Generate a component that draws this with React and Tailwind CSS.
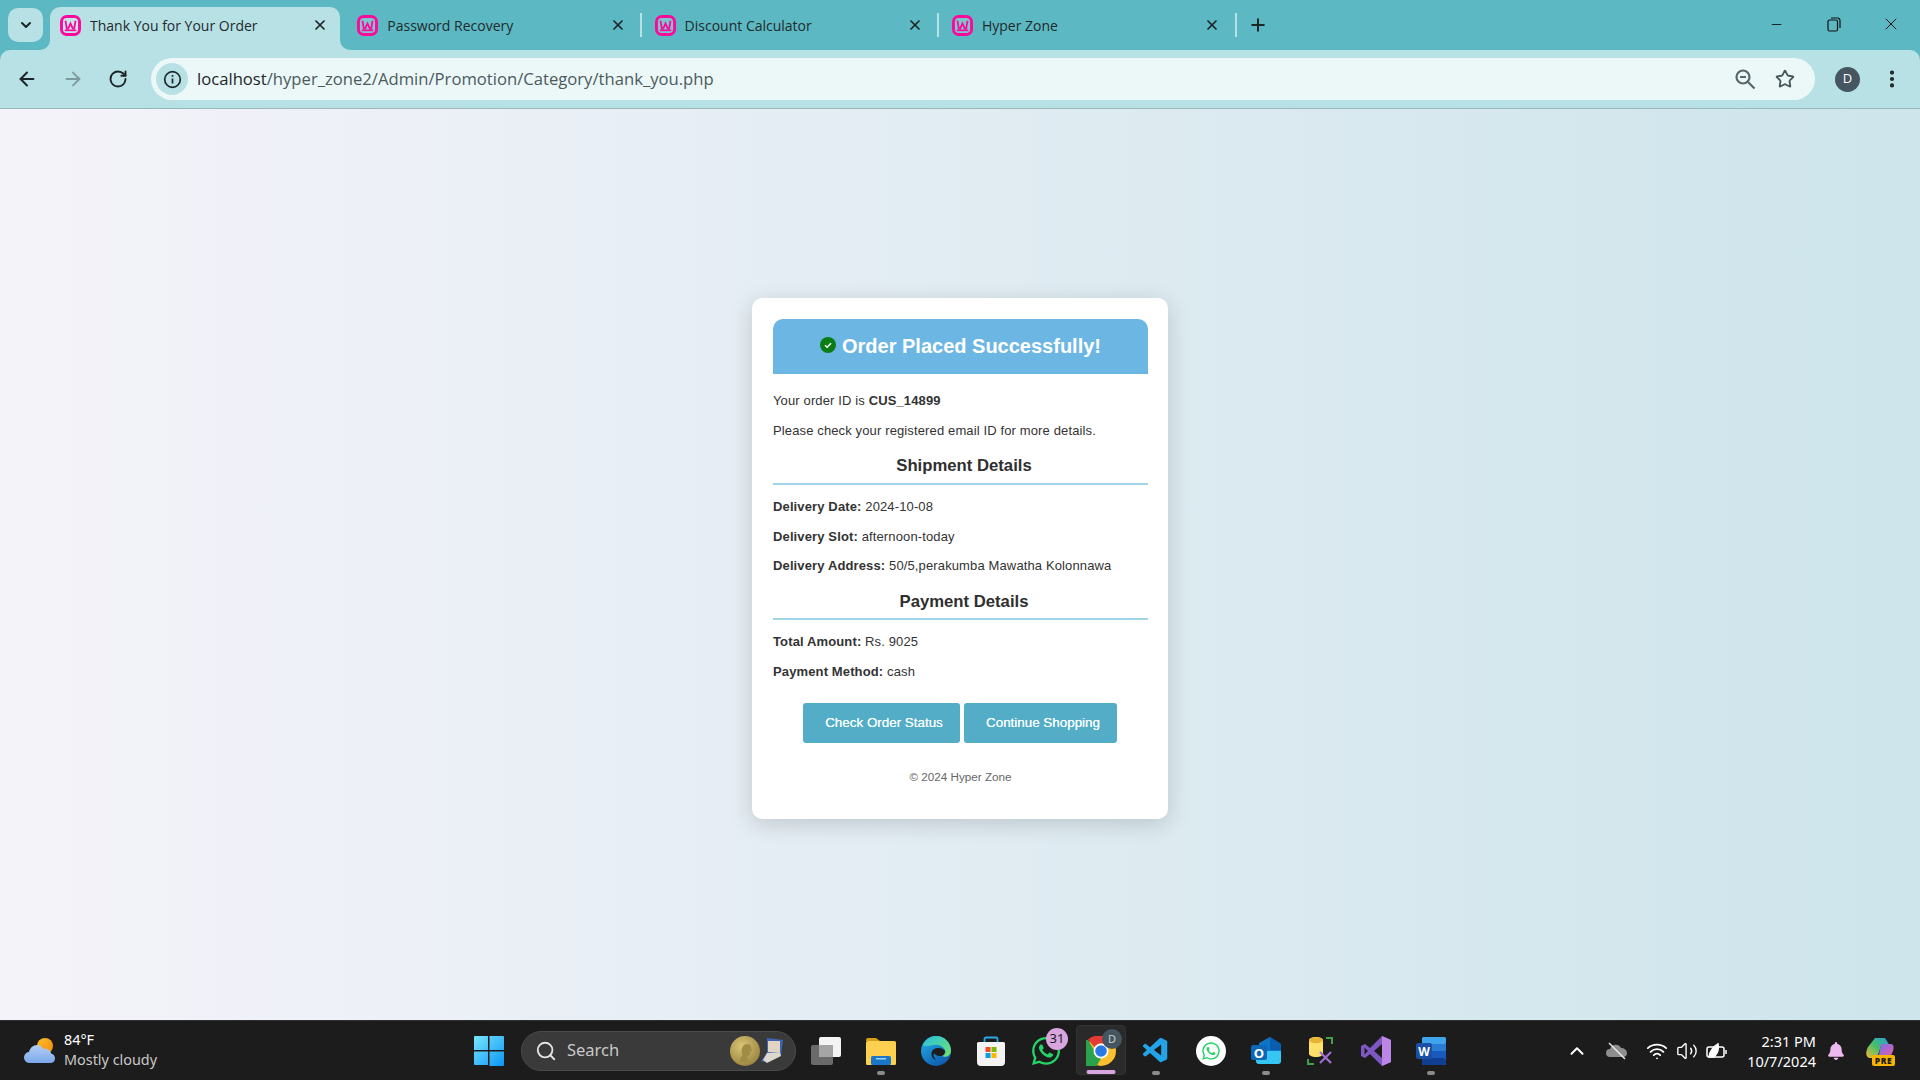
import React from "react";
import { ArrowLeft, ArrowRight, RotateCw, X, Plus, ChevronDown, ChevronUp, Search, Star, EllipsisVertical, Minus, Wifi, Volume2 } from "lucide-react";
import { FaWhatsapp, FaBell } from "react-icons/fa";
import { VscVscode } from "react-icons/vsc";

const Favicon = () => (
  <svg width="21" height="21" viewBox="0 0 20 20" className="shrink-0">
    <rect x="1.4" y="1.4" width="17.2" height="17.2" rx="5" fill="#fff" fillOpacity="0.2" stroke="#fb0a9c" strokeWidth="2.8" />
    <path d="M5.200 5.500l1.300 7.500h1.300l2.200-5 2.200 5h1.300l1.300-7.500" fill="none" stroke="#fb0a9c" strokeWidth="1.700" />
    <rect x="4.500" y="13.800" width="11" height="1.600" fill="#fb0a9c" />
  </svg>
);

const Tab = ({ title, active, sep }) => (
  <div className="relative flex h-[43px] w-[297.3px] shrink-0 items-center pb-[7px] pl-[10px] pr-[2.5px]">
    {active && (
      <>
        <div className="absolute left-0 top-0 h-full w-[290px] rounded-t-[10px] bg-[#b7e1e5]" />
        <div className="absolute bottom-0 left-[-10px] h-[10px] w-[10px] bg-[#b7e1e5]">
          <div className="h-full w-full rounded-br-[10px] bg-[#5cb8c2]" />
        </div>
        <div className="absolute bottom-0 left-[290px] h-[10px] w-[10px] bg-[#b7e1e5]">
          <div className="h-full w-full rounded-bl-[10px] bg-[#5cb8c2]" />
        </div>
      </>
    )}
    <div className="relative flex h-full flex-1 items-center">
      <Favicon />
      <span className="ml-[9px] flex-1 truncate font-['Open_Sans',sans-serif] text-[14px] text-[#1f2a2c]">{title}</span>
      <X size={16} strokeWidth={2.6} className="mr-[14.5px] text-[#1f2628]" />
      <div className={`h-[24px] w-[2px] ${sep ? "bg-[#b7e1e5]" : "bg-transparent"}`} />
    </div>
  </div>
);

const TopBar = () => (
  <div className="shrink-0">
    <div className="relative flex h-[50px] items-end bg-[#5cb8c2] pl-[8px]">
      <div className="mb-[8px] mr-[7px] flex h-[34px] w-[35px] items-center justify-center rounded-[10px] bg-[#b7e1e5]">
        <ChevronDown size={16} strokeWidth={3} className="text-[#1f2628]" />
      </div>
      <Tab title="Thank You for Your Order" active />
      <Tab title="Password Recovery" sep />
      <Tab title="Discount Calculator" sep />
      <Tab title="Hyper Zone" sep />
      <div className="mb-[13px] ml-[7px] flex h-[24px] w-[24px] items-center justify-center self-end">
        <Plus size={20} strokeWidth={2.4} className="text-[#1f2628]" />
      </div>
      <div className="ml-auto flex h-full items-start">
        <div className="flex h-[48px] w-[57px] items-center justify-center"><Minus size={15} strokeWidth={1.4} className="text-[#111]" /></div>
        <div className="flex h-[48px] w-[57px] items-center justify-center">
          <svg width="14" height="15" viewBox="0 0 14 15" fill="none" stroke="#111" strokeWidth="1.2"><rect x="1" y="3" width="9.5" height="11" rx="1.5" /><path d="M4 1h6.5A2.5 2.5 0 0 1 13 3.5V11" /></svg>
        </div>
        <div className="mr-[1px] flex h-[48px] w-[57px] items-center justify-center"><X size={20} strokeWidth={1.2} className="text-[#111]" /></div>
      </div>
    </div>
    <div className="bg-[#5cb8c2]">
      <div className="flex h-[58px] items-center rounded-t-[10px] bg-[#b7e1e5] pl-[10px] pr-[15px]">
        <div className="flex w-[141px] items-center">
          <ArrowLeft size={22} strokeWidth={2.2} className="ml-[6px] text-[#1c2628]" />
          <ArrowRight size={22} strokeWidth={2} className="ml-[24px] text-[#7f9a9e]" />
          <RotateCw size={20} strokeWidth={2.3} className="ml-[24px] text-[#1c2628]" />
        </div>
        <div className="flex h-[42px] w-[1664px] items-center rounded-full bg-[#ecf8f8] pl-[5px] pr-[20px]">
          <div className="flex h-[32px] w-[32px] items-center justify-center rounded-full bg-[#b7e1e5]">
            <svg width="19" height="19" viewBox="0 0 19 19" fill="none" stroke="#1c2628" strokeWidth="1.7"><circle cx="9.5" cy="9.5" r="7.8" /><path d="M9.5 8.5v5M9.5 5v1.8" /></svg>
          </div>
          <span className="ml-[9px] flex-1 font-['Open_Sans',sans-serif] text-[16.65px] text-[#4b5a5d]"><span className="text-[#1c2628]">localhost</span>/hyper_zone2/Admin/Promotion/Category/thank_you.php</span>
          <svg width="22" height="22" viewBox="0 0 22 22" fill="none" stroke="#56686b" strokeWidth="2.200"><circle cx="9" cy="9" r="6.500" /><path d="M6 9h6M14 14l6.500 6.500" /></svg>
          <Star size={20} strokeWidth={2.200} className="ml-[19px] text-[#47585b]" />
        </div>
        <div className="ml-[20px] flex h-[25px] w-[25px] items-center justify-center rounded-full bg-[#465660] font-['Open_Sans',sans-serif] text-[13px] text-white">D</div>
        <EllipsisVertical size={22} strokeWidth={2.6} className="ml-[21px] text-[#1c2628]" />
      </div>
      <div className="h-px bg-[#9ab7bb]" />
    </div>
  </div>
);

const Row = ({ label, value, className = "" }) => (
  <p className={`text-[13px] leading-[15px] tracking-[0.13px] ${className}`}>
    <b>{label}</b> {value}
  </p>
);

const SectionTitle = ({ children, className = "" }) => (
  <h2 className={`border-b-2 border-[#a3d5e9] pl-[7px] text-center text-[16.7px] font-bold leading-[18px] text-[#2f2f2f] ${className}`}>{children}</h2>
);

const Card = () => (
  <div className="w-[416px] rounded-[10px] bg-white pb-[35px] pl-[21px] pr-[20px] pt-[21px] font-['Liberation_Sans',Arial,sans-serif] text-[#333] shadow-[0_5px_22px_rgba(0,0,0,0.16)]">
    <div className="flex h-[55px] items-center justify-center gap-[6px] rounded-t-[10px] bg-[#6cb6e4]">
      <svg width="16" height="16" viewBox="0 0 16 16" className="shrink-0 -translate-y-[1px]"><circle cx="8" cy="8" r="8" fill="#0a7d17" /><path d="M5 8.2l2.1 2L11 6.2" fill="none" stroke="#fff" strokeWidth="1.5" /></svg>
      <span className="text-[20px] font-bold text-white">Order Placed Successfully!</span>
    </div>
    <p className="mt-[19.5px] text-[13px] leading-[15px] tracking-[0.13px]">Your order ID is <b>CUS_14899</b></p>
    <p className="mt-[15px] text-[13px] leading-[15px] tracking-[0.13px]">Please check your registered email ID for more details.</p>
    <SectionTitle className="mt-[19px] pb-[8px]">Shipment Details</SectionTitle>
    <Row className="mt-[13.5px]" label="Delivery Date:" value="2024-10-08" />
    <Row className="mt-[15px]" label="Delivery Slot:" value="afternoon-today" />
    <Row className="mt-[14.5px]" label="Delivery Address:" value="50/5,perakumba Mawatha Kolonnawa" />
    <SectionTitle className="mt-[19.5px] pb-[7px]">Payment Details</SectionTitle>
    <Row className="mt-[14.5px]" label="Total Amount:" value="Rs. 9025" />
    <Row className="mt-[14.5px]" label="Payment Method:" value="cash" />
    <div className="mt-[24.5px] flex justify-center gap-[4px] pr-[2px]">
      <button className="h-[40px] w-[157px] rounded-[3px] bg-[#53adc7] pl-[6px] text-[13.4px] text-[#f6fdff] [text-shadow:0_0_0.6px_#fff]">Check Order Status</button>
      <button className="h-[40px] w-[153px] rounded-[3px] bg-[#53adc7] pl-[6px] text-[13.4px] text-[#f6fdff] [text-shadow:0_0_0.6px_#fff]">Continue Shopping</button>
    </div>
    <p className="mt-[26.5px] text-center text-[11.7px] leading-[14px] text-[#666]">© 2024 Hyper Zone</p>
  </div>
);

const Dot = () => <span className="absolute bottom-[5px] left-1/2 h-[4px] w-[8px] -translate-x-1/2 rounded-full bg-[#8b8b8b]" />;

const Cell = ({ children, dot, className = "" }) => (
  <div className={`relative flex h-full w-[55px] shrink-0 items-center justify-center ${className}`}>
    {children}
    {dot && <Dot />}
  </div>
);

const WindowsLogo = () => (
  <svg width="30" height="30" viewBox="0 0 30 30">
    <defs>
      <linearGradient id="win" x1="0" y1="0" x2="1" y2="1"><stop offset="0" stopColor="#7ae5ff" /><stop offset="1" stopColor="#0a96f5" /></linearGradient>
    </defs>
    <path d="M0 1a1 1 0 0 1 1-1h13v14H0zM15.500 0H29a1 1 0 0 1 1 1v13H15.500zM0 15.500h14V29H1a1 1 0 0 1-1-1zM15.500 15.500H30V29a1 1 0 0 1-1 1H15.500z" fill="url(#win)" />
  </svg>
);

const TaskView = () => (
  <svg width="30" height="28" viewBox="0 0 30 28">
    <rect x="0" y="8" width="22" height="20" rx="2" fill="#6a6a6a" />
    <rect x="8" y="0" width="22" height="20" rx="2" fill="#f4f4f4" />
    <rect x="8" y="8" width="14" height="12" fill="#a5a5a5" />
  </svg>
);

const Folder = () => (
  <svg width="30" height="28" viewBox="0 0 30 28">
    <path d="M0 3a2 2 0 0 1 2-2h8l4 3h-14z" fill="#d99d1c" />
    <rect x="0" y="4" width="30" height="24" rx="1.500" fill="#fdd04f" />
    <rect x="5" y="19" width="20" height="9" rx="1.500" fill="#1976c8" />
    <rect x="10" y="21" width="10" height="1.500" fill="#9ed4f5" />
  </svg>
);

const Edge = () => (
  <svg width="30" height="30" viewBox="0 0 30 30">
    <defs>
      <linearGradient id="eg1" x1="0" y1="0" x2="0.6" y2="1"><stop offset="0" stopColor="#25b6e8" /><stop offset="1" stopColor="#0f5cb0" /></linearGradient>
      <linearGradient id="eg2" x1="0" y1="0" x2="1" y2="1"><stop offset="0" stopColor="#27bfe2" /><stop offset="1" stopColor="#72e46a" /></linearGradient>
    </defs>
    <circle cx="15" cy="15" r="15" fill="url(#eg1)" />
    <path d="M2 9C5 2 11 0 15 0c8 0 15 6 15 15 0 5-6 7-9 5 3-1 4-4 3-6-2-4-7-6-12-5C8 10 4 11 2 9z" fill="url(#eg2)" />
    <path d="M13 13c4-2 9-1 11 2 0 3-2 5-5 5-3 0-5-1-6-3-1 2 0 5 2 7-5-1-6-8-2-11z" fill="#1c1c1c" />
  </svg>
);

const Store = () => (
  <svg width="30" height="30" viewBox="0 0 30 30">
    <path d="M8.500 6V3a1.500 1.500 0 0 1 1.500-1.500h10A1.500 1.500 0 0 1 21.500 3v3" fill="none" stroke="#2aa7e6" strokeWidth="1.800" />
    <path d="M1 7.500A1.500 1.500 0 0 1 2.500 6h25A1.500 1.500 0 0 1 29 7.500V26a4 4 0 0 1-4 4H5a4 4 0 0 1-4-4z" fill="#f3f3f3" />
    <rect x="9.500" y="11" width="5" height="5" fill="#ee4f23" />
    <rect x="15.500" y="11" width="5" height="5" fill="#7fb900" />
    <rect x="9.500" y="17" width="5" height="5" fill="#0a9de8" />
    <rect x="15.500" y="17" width="5" height="5" fill="#ffb700" />
  </svg>
);

const Chrome = () => (
  <svg width="30" height="30" viewBox="0 0 30 30">
    <circle cx="15" cy="15" r="15" fill="#fbc02d" />
    <path d="M15 0a15 15 0 0 1 13 7.500H15a7.500 7.500 0 0 0-6.500 3.750L2 3.600A15 15 0 0 1 15 0z" fill="#e53935" />
    <path d="M2 3.800l6.500 11.200A7.500 7.500 0 0 0 15 22.500l-6.500 11A15 15 0 0 1 2 3.800zM8.500 27.500" fill="#2ba24c" />
    <circle cx="15" cy="15" r="7.500" fill="#fff" />
    <circle cx="15" cy="15" r="5.800" fill="#2a78e4" />
  </svg>
);

const Outlook = () => (
  <svg width="30" height="28" viewBox="0 0 30 28">
    <path d="M8 6l11-6 11 7v8H8z" fill="#0f74c6" />
    <path d="M19 0l11 7v6H19z" fill="#0a5eb0" />
    <path d="M5 14h25v10a3 3 0 0 1-3 3H8a3 3 0 0 1-3-3z" fill="#35c6f4" />
    <rect x="0" y="8" width="16" height="15" rx="2" fill="#0e66b8" />
    <text x="8" y="20.500" textAnchor="middle" fontFamily="'Open Sans',sans-serif" fontWeight="700" fontSize="13" fill="#fff">O</text>
  </svg>
);

const SqlTool = () => (
  <svg width="28" height="28" viewBox="0 0 28 28">
    <path d="M19 1h6v6M1 22v5h6" fill="none" stroke="#43a047" strokeWidth="2" />
    <path d="M2 3c0-1.500 3-3 7-3s7 1.500 7 3v14c0 1.500-3 3-7 3s-7-1.500-7-3z" fill="#fde16b" />
    <ellipse cx="9" cy="3.200" rx="7" ry="3" fill="#e8b437" />
    <path d="M13 15l11 11M24 15L13 26" stroke="#a06fd0" strokeWidth="2.200" />
  </svg>
);

const VS = () => (
  <svg width="30" height="30" viewBox="0 0 30 30">
    <path d="M21 0l9 4v22l-9 4-12-12-5 4-4-2V10l4-2 5 4z" fill="#7e57c2" />
    <path d="M21 0l9 4v22l-9 4z" fill="#bb86e6" />
    <path d="M21 8v14l-8-7zM3.500 11.500v7l3.500-3.500z" fill="#1c1c1c" />
  </svg>
);

const Word = () => (
  <svg width="30" height="28" viewBox="0 0 30 28">
    <rect x="6" y="0" width="24" height="28" rx="2" fill="#2b7cd3" />
    <rect x="6" y="0" width="24" height="7" rx="2" fill="#41a5ee" />
    <rect x="6" y="14" width="24" height="7" fill="#185abd" />
    <rect x="6" y="21" width="24" height="7" rx="2" fill="#103f91" />
    <rect x="0" y="6" width="16" height="16" rx="2" fill="#1a4fa8" />
    <text x="8" y="18.500" textAnchor="middle" fontFamily="'Open Sans',sans-serif" fontWeight="700" fontSize="12" fill="#fff">W</text>
  </svg>
);

const Weather = () => (
  <svg width="32" height="26" viewBox="0 0 32 26">
    <defs>
      <linearGradient id="cl" x1="0" y1="0" x2="0" y2="1"><stop offset="0" stopColor="#b4cff5" /><stop offset="1" stopColor="#7ba8ea" /></linearGradient>
      <linearGradient id="sn" x1="0" y1="0" x2="1" y2="1"><stop offset="0" stopColor="#fbbf24" /><stop offset="1" stopColor="#f08a12" /></linearGradient>
    </defs>
    <circle cx="21" cy="8" r="8" fill="url(#sn)" />
    <path d="M6 25a5.500 5.500 0 0 1-1-11c1-4 4-7 8-7 3 0 5 2 6 4 1-.6 3-.6 5 .5 2 1 3 2.500 3 4 3 .5 4 3 4 5 0 3-2 4.500-5 4.500z" fill="url(#cl)" />
  </svg>
);

const MedalBox = () => (
  <div className="flex items-center">
    <svg width="30" height="30" viewBox="0 0 30 30">
      <defs><radialGradient id="md" cx="0.4" cy="0.35" r="0.8"><stop offset="0" stopColor="#dcc678" /><stop offset="1" stopColor="#8f7a35" /></radialGradient></defs>
      <circle cx="15" cy="15" r="15" fill="url(#md)" />
      <path d="M10 26c0-4 1-6 3-7-2-2-2-7 1-10 3-2 7-1 7 2l1 4-2 1 0 3-3 1 2 6z" fill="#a08c45" />
    </svg>
    <svg width="22" height="26" viewBox="0 0 22 26" className="ml-[1px]">
      <path d="M6 0l16 2-2 15L4 24l-4-1 6-8z" fill="#3f66b5" />
      <rect x="7" y="3" width="12" height="11" fill="#e2d3c2" />
      <path d="M2 22l4-7 13-1 1 4-14 7z" fill="#dcd8d0" />
    </svg>
  </div>
);

const Copilot = () => (
  <svg width="30" height="30" viewBox="0 0 30 30">
    <defs>
      <linearGradient id="cp1" x1="0" y1="1" x2="1" y2="0"><stop offset="0" stopColor="#f4b73a" /><stop offset="0.5" stopColor="#43c06a" /><stop offset="1" stopColor="#2a9be8" /></linearGradient>
      <linearGradient id="cp2" x1="0" y1="0" x2="1" y2="1"><stop offset="0" stopColor="#7a6ee8" /><stop offset="1" stopColor="#ee5fa0" /></linearGradient>
    </defs>
    <path d="M10 2h10l5 8H16l-4 12H4C0 20 1 15 3 11z" fill="url(#cp1)" />
    <path d="M16 8h10c3 0 3 4 2 7l-3 7c-1 2-3 2-5 2h-7z" fill="url(#cp2)" />
    <rect x="7" y="19" width="23" height="11" rx="2" fill="#f7b500" />
    <text x="18.500" y="28" textAnchor="middle" fontFamily="'Open Sans',sans-serif" fontWeight="800" fontSize="8.500" letterSpacing="0.5" fill="#1c1c1c">PRE</text>
  </svg>
);

const Taskbar = () => (
  <div className="flex h-[60px] shrink-0 items-center border-t border-[#2f2f2f] bg-[#1c1c1c] font-['Noto_Sans',sans-serif]">
    <div className="flex w-[461.5px] shrink-0 items-center pl-[24px]">
      <Weather />
      <div className="ml-[8px] -translate-y-[1px] leading-[20px]">
        <div className="text-[14.4px] text-white">84°F</div>
        <div className="text-[14.4px] text-[#c9c9c9]">Mostly cloudy</div>
      </div>
    </div>
    <Cell><WindowsLogo /></Cell>
    <div className="ml-[4.5px] mr-[2.5px] flex h-[40px] w-[275px] shrink-0 items-center rounded-full border border-[#4a4a4a] bg-[#3a3a3a] pl-[13px] pr-[12px]">
      <Search size={22} strokeWidth={2} className="text-[#e4e4e4]" />
      <span className="ml-[10px] flex-1 text-[16.5px] text-[#c9c9c9]">Search</span>
      <MedalBox />
    </div>
    <Cell><TaskView /></Cell>
    <Cell dot><Folder /></Cell>
    <Cell><Edge /></Cell>
    <Cell><Store /></Cell>
    <Cell>
      <FaWhatsapp size={32} color="#25d366" />
      <span className="absolute right-[5.500px] top-[7px] flex h-[22px] w-[22px] items-center justify-center rounded-full bg-[#d9a5de] text-[13px] text-[#1c1c1c]">31</span>
    </Cell>
    <Cell>
      <div className="absolute left-[2.500px] top-[4px] h-[50px] w-[50px] rounded-[4px] border border-[#333] bg-[#2a2a2a]" />
      <span className="relative"><Chrome /></span>
      <span className="absolute right-[6.500px] top-[8px] flex h-[20px] w-[20px] items-center justify-center rounded-full bg-[#465660] text-[11px] text-[#c5ced2]">D</span>
      <span className="absolute bottom-[6px] left-1/2 h-[4px] w-[29px] -translate-x-1/2 rounded-full bg-[#d8a5de]" />
    </Cell>
    <Cell dot><VscVscode size={30} color="#23a3e8" /></Cell>
    <Cell>
      <div className="flex h-[30px] w-[30px] items-center justify-center rounded-full bg-white"><FaWhatsapp size={20} color="#25d366" /></div>
    </Cell>
    <Cell dot><Outlook /></Cell>
    <Cell><SqlTool /></Cell>
    <Cell><VS /></Cell>
    <Cell dot><Word /></Cell>
    <div className="ml-auto flex h-full items-center text-white">
      <ChevronUp size={22} strokeWidth={2.200} className="mr-[18px]" />
      <svg width="22" height="18" viewBox="0 0 22 18" className="mr-[18px]">
        <path d="M4 15a4 4 0 0 1 0-8c1-3 4-5 7-4 2 0 3 1 4 3 3 0 6 2 6 5s-2 4-4 4z" fill="#8e8e8e" />
        <path d="M3 1l16 16" stroke="#ececec" strokeWidth="1.500" />
      </svg>
      <Wifi size={22} strokeWidth={2} className="mr-[8px]" />
      <Volume2 size={22} strokeWidth={1.500} className="mr-[8px]" />
      <svg width="22" height="18" viewBox="0 0 22 18" fill="none" stroke="#fff" strokeWidth="1.500" className="mr-[3px]">
        <rect x="1" y="5" width="17" height="10" rx="2" />
        <path d="M20 8v4" />
        <path d="M3 15c1-6 4-10 9-13 1 4 0 9-4 13z" fill="#fff" />
      </svg>
      <div className="w-[86px] -translate-x-[1px] text-right text-[14.5px] leading-[20px]">
        <div>2:31 PM</div>
        <div>10/7/2024</div>
      </div>
      <FaBell size={18} color="#eeb9f0" className="ml-[10px]" />
      <span className="ml-[20px] mr-[25px]"><Copilot /></span>
    </div>
  </div>
);

export default function App() {
  return (
    <div className="flex h-screen w-full flex-col overflow-hidden">
      <TopBar />
      <main className="flex flex-1 items-center justify-center bg-[linear-gradient(to_right,#f5f3fa,#cde5eb)] pb-[13px]">
        <Card />
      </main>
      <Taskbar />
    </div>
  );
}
